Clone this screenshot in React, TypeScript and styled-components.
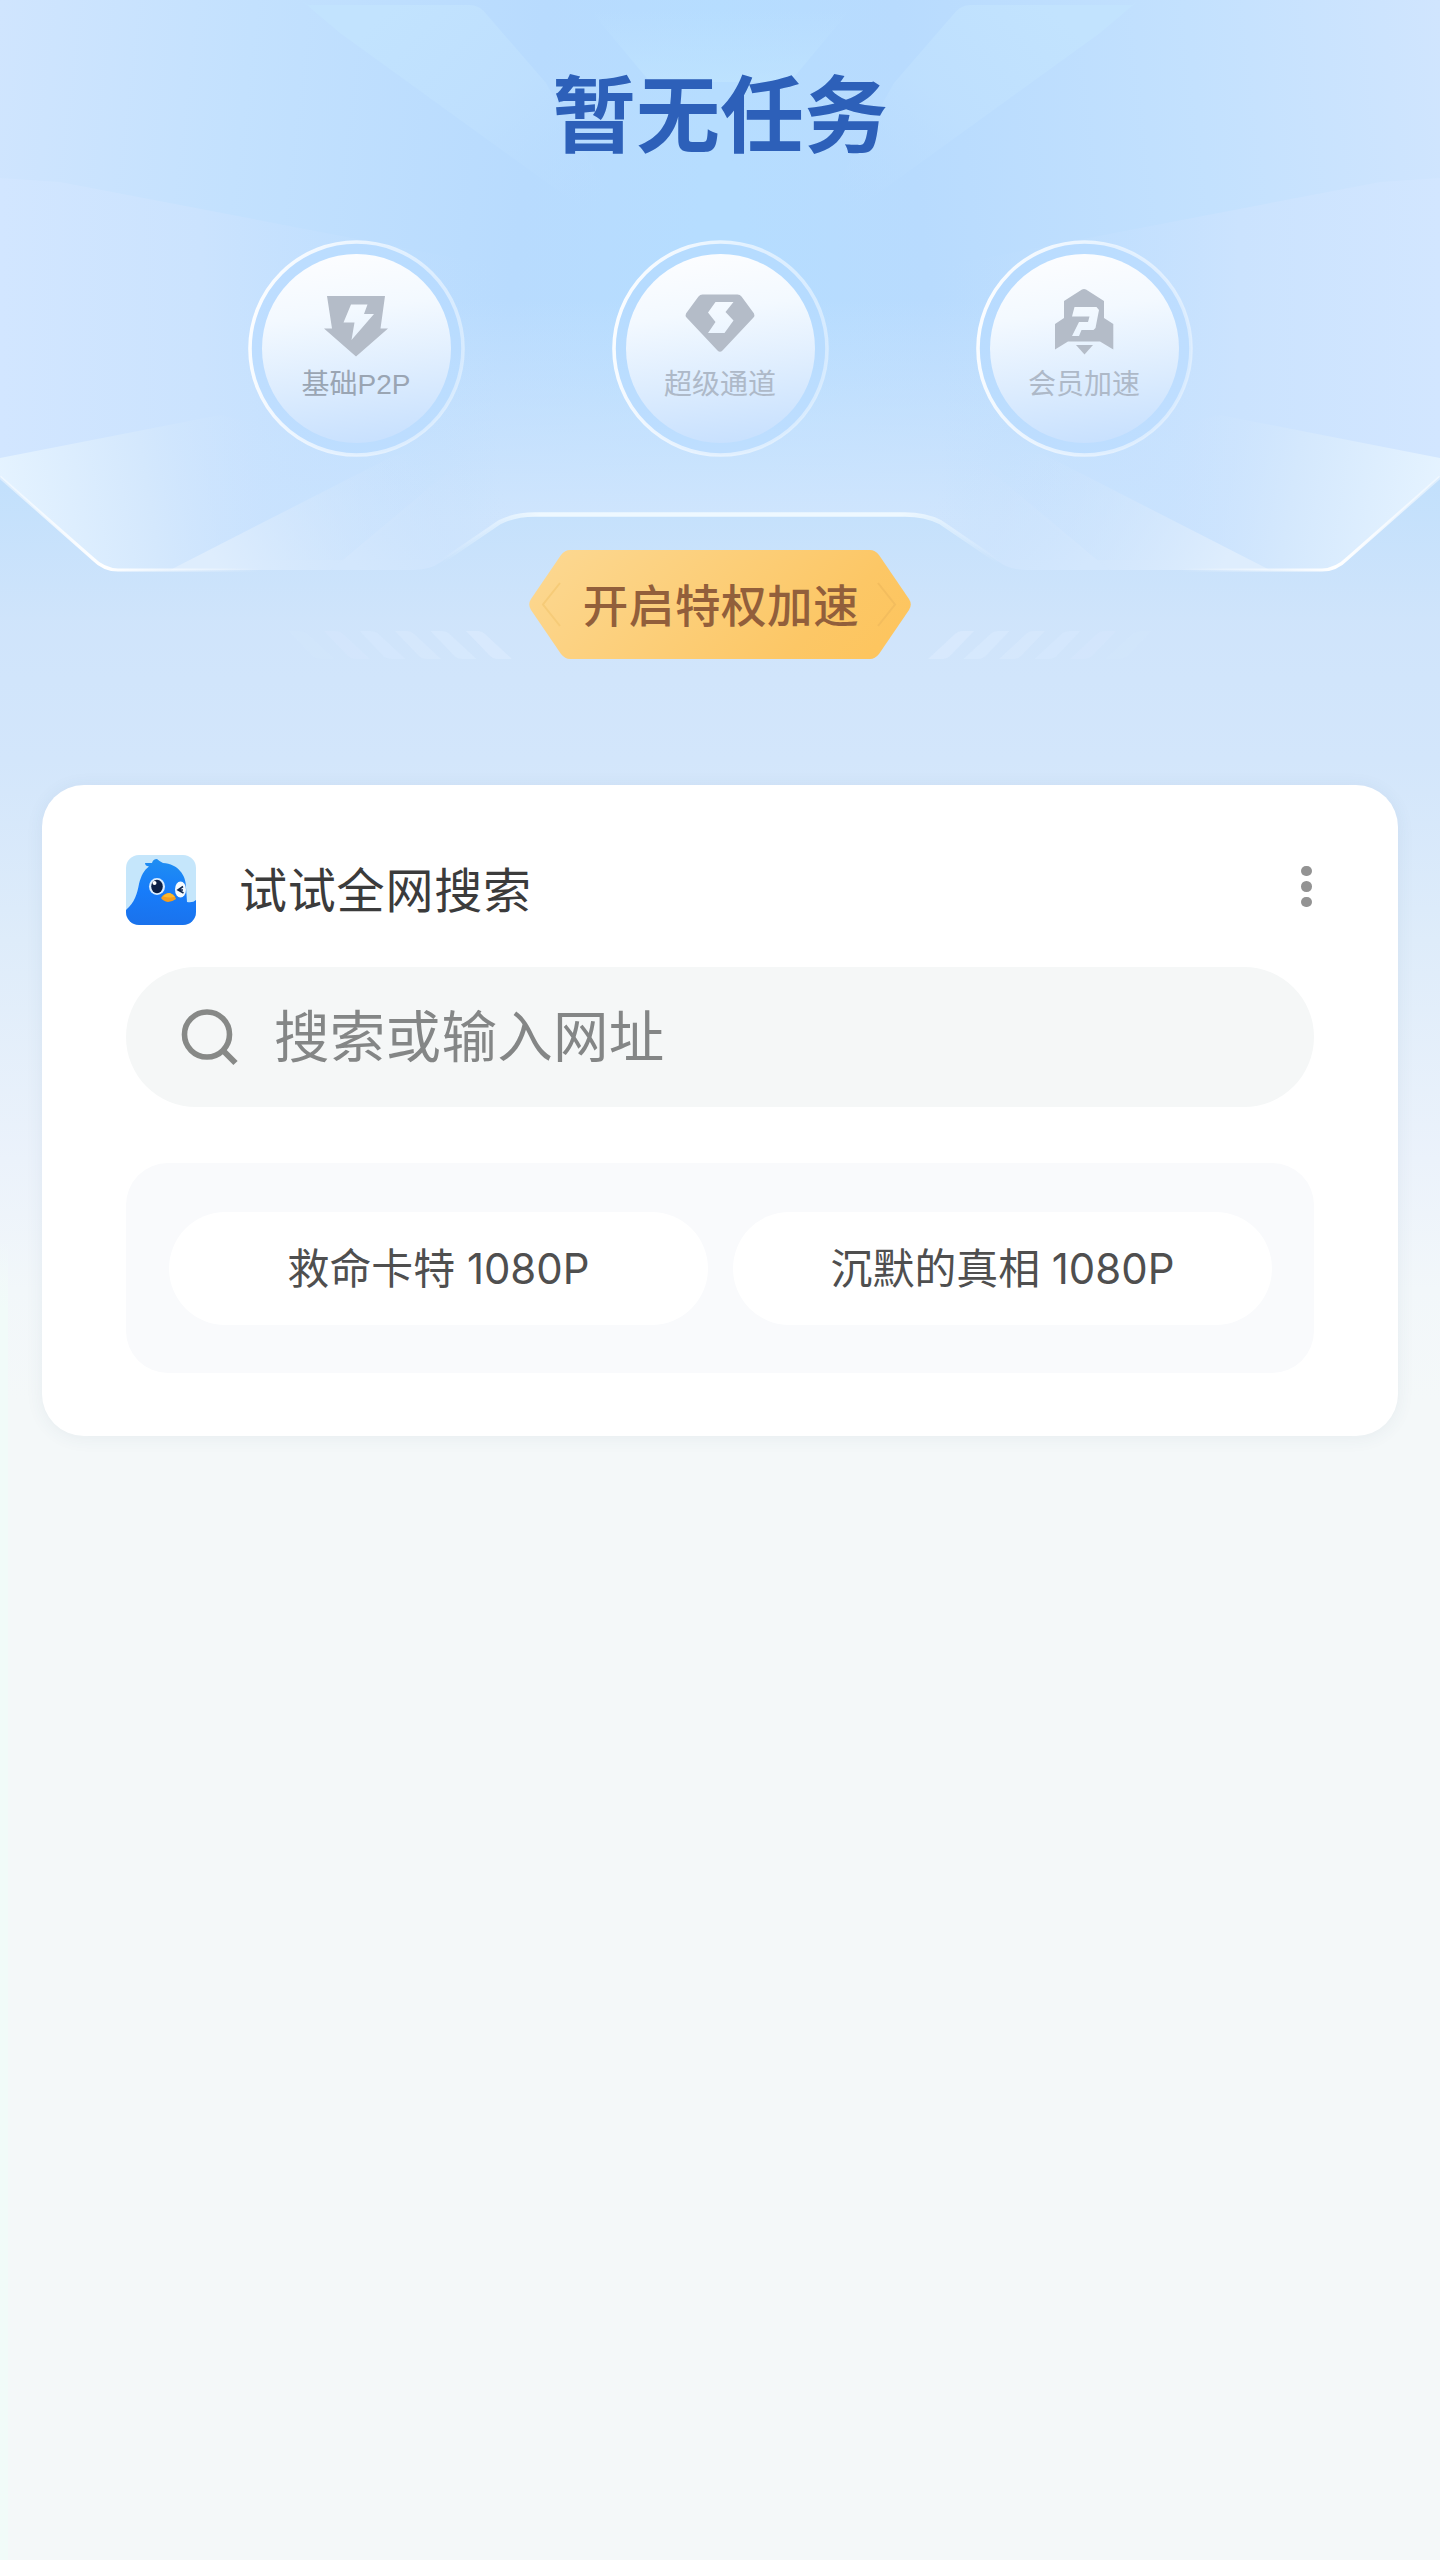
import React from 'react';
import styled, { createGlobalStyle } from 'styled-components';

const Global = createGlobalStyle`
  * { box-sizing: border-box; }
  body { margin: 0; background: #f4f8fa; }
`;

const Page = styled.main`
  position: relative;
  width: 1440px;
  height: 2560px;
  overflow: hidden;
  font-family: 'Noto Sans CJK SC', sans-serif;
  background:
    linear-gradient(180deg, rgba(240, 252, 249, 0) 1240px, #f1fbf9 1310px) 0 0 / 8px 100% no-repeat,
    linear-gradient(180deg, #bfdffe 0px, #c4e0fb 480px, #cfe4fb 600px, #d3e6fb 760px, #deecfa 940px, #ebf2fb 1160px, #f2f7fa 1290px, #f4f8f9 1400px);
`;

const Scene = styled.svg`
  position: absolute;
  inset: 0 0 auto 0;
  display: block;
`;

const Hero = styled.header`
  position: relative;
  height: 785px;
  display: flex;
  flex-direction: column;
  align-items: center;
`;

const Title = styled.h1`
  margin: 60px 0 0;
  height: 100px;
  line-height: 100px;
  font-size: 84px;
  font-weight: 700;
  color: #2d60b9;
`;

const Channels = styled.ul`
  list-style: none;
  display: flex;
  gap: 147px;
  margin: 80px 0 0;
  padding: 0;
`;

const Channel = styled.li`
  position: relative;
  width: 217px;
  height: 217px;
  padding: 14px;
`;

const Ring = styled.svg`
  position: absolute;
  inset: 0;
`;

const Disc = styled.div`
  position: relative;
  width: 189px;
  height: 189px;
  border-radius: 50%;
  display: flex;
  flex-direction: column;
  align-items: center;
  background: linear-gradient(172deg, #fcfdff 5%, #f3f9ff 32%, #dcecfe 66%, #c7e0fe 96%);
`;

const Glyph = styled.svg`
  margin-top: 30px;
  flex: none;
`;

const Label = styled.span<{ $color: string }>`
  margin-top: 3px;
  line-height: 36px;
  font-family: 'Liberation Sans', 'Noto Sans CJK SC', sans-serif;
  font-size: 28px;
  font-weight: 400;
  white-space: nowrap;
  color: ${(p) => p.$color};
`;

const Boost = styled.button`
  position: relative;
  width: 382px;
  height: 109px;
  margin: 93px 0 0;
  padding: 0;
  border: 0;
  background: none;
  font: 500 45.5px/106px 'Noto Sans CJK SC', sans-serif;
  letter-spacing: 0.6px;
  color: #925f3b;
`;

const BoostShape = styled.svg`
  position: absolute;
  inset: 0;
`;

const BoostText = styled.span`
  position: relative;
  display: block;
  height: 109px;
  padding-left: 2px;
`;

const Card = styled.section`
  position: relative;
  width: 1356px;
  height: 651px;
  margin-left: 42px;
  padding: 70px 84px 0;
  border-radius: 42px;
  background: #fff;
  box-shadow: 0 2px 18px rgba(60, 90, 120, 0.07);
`;

const CardHead = styled.div`
  display: flex;
  align-items: center;
  height: 70px;
`;

const CardTitle = styled.h2`
  flex: 1;
  height: 70px;
  margin: 0 0 0 43px;
  font-size: 48px;
  line-height: 65px;
  font-weight: 400;
  letter-spacing: 0.8px;
  color: #3b3b3b;
`;

const More = styled.div`
  display: flex;
  flex-direction: column;
  gap: 5px;
  margin: -7px 2px 0 0;
`;

const Dot = styled.i`
  width: 10.6px;
  height: 10.6px;
  border-radius: 50%;
  background: #939393;
`;

const Search = styled.div`
  display: flex;
  align-items: center;
  height: 140px;
  margin-top: 42px;
  padding-left: 54px;
  border-radius: 70px;
  background: #f5f7f7;
  color: #848686;
  font-size: 55.5px;
  line-height: 133px;
`;

const SearchText = styled.span`
  height: 140px;
  margin-left: 34px;
  letter-spacing: 0.3px;
`;

const Suggestions = styled.div`
  display: flex;
  justify-content: space-between;
  align-items: center;
  height: 210px;
  margin-top: 56px;
  padding: 0 42px 0 43px;
  border-radius: 42px;
  background: #f9fafc;
`;

const Pill = styled.div`
  display: flex;
  justify-content: center;
  width: 539px;
  height: 113px;
  border-radius: 57px;
  background: #fff;
  font-family: Inter, 'Noto Sans CJK SC', sans-serif;
  font-size: 41.9px;
  line-height: 113px;
  color: #4f4f4f;
  white-space: pre;
`;

const HalfScene = () => (
  <g>
    <rect width="721" height="600" fill="url(#side)" />
    <rect y="300" width="721" height="300" fill="url(#fade)" />
    <path d="M0 178 L60 182 L519 270 L519 560 L0 560Z" fill="url(#ray)" />
    <path d="M301 0 L308 5 H470 Q480 5 488 16 L546 83 L640 250 L340 33Z" fill="url(#beam)" />
    <path d="M0 458 L220 415 L395 455 L170 570 H113 Q101 569 92 559 L0 477Z" fill="url(#corner)" />
    <path d="M170 570 L395 455 L500 440 L331 570Z" fill="url(#floor)" />
    <path d="M331 570 L480 445 L560 514 H533 Q515 514 500 522 L441 562 Q430 570 413 570Z" fill="url(#floor2)" />
    <path d="M0 477 L92 559 Q103 570 115 570 H413 Q430 570 441 562 L500 522 Q515 514 533 514 H721 V620 H0Z" fill="url(#under)" />
    <path d="M0 477 L92 558 Q104 570 118 570 H260" fill="none" stroke="url(#edge)" strokeWidth="3.2" />
    <path d="M441 562 L500 522 Q515 514.500 535 514.500 H721" fill="none" stroke="url(#ridge)" strokeWidth="4.500" />
    {[0, 1, 2, 3, 4, 5].map((i) => (
      <path
        key={i}
        d="M0 0 H11 Q16 0 19 3 L46 28 H32 Q27 28 24 25Z"
        transform={`translate(${466 - i * 35.5} 631)`}
        fill="#d9eafe"
        opacity={0.8 - i * 0.12}
      />
    ))}
  </g>
);

const Backdrop = () => (
  <Scene width="1440" height="785" viewBox="0 0 1440 785">
    <defs>
      <linearGradient id="side" x1="0" y1="0" x2="1" y2="0.1">
        <stop offset="0" stopColor="#d0e5fe" />
        <stop offset="0.35" stopColor="#c3e1fe" />
        <stop offset="0.75" stopColor="#b8dbfe" />
        <stop offset="1" stopColor="#b6ddff" />
      </linearGradient>
      <linearGradient id="ray" gradientUnits="userSpaceOnUse" x1="0" y1="300" x2="500" y2="300">
        <stop offset="0" stopColor="#d2e6ff" />
        <stop offset="0.4" stopColor="#cbe3fe" />
        <stop offset="1" stopColor="#bbddff" stopOpacity="0" />
      </linearGradient>
      <linearGradient id="beam" gradientUnits="userSpaceOnUse" x1="400" y1="0" x2="590" y2="215">
        <stop offset="0" stopColor="#c2e3fe" />
        <stop offset="0.5" stopColor="#bfe0fe" stopOpacity="0.8" />
        <stop offset="1" stopColor="#b9dcff" stopOpacity="0" />
      </linearGradient>
      <linearGradient id="corner" gradientUnits="userSpaceOnUse" x1="0" y1="500" x2="290" y2="450">
        <stop offset="0" stopColor="#e5f3ff" />
        <stop offset="0.5" stopColor="#d4e8fd" />
        <stop offset="1" stopColor="#c7e1fe" stopOpacity="0" />
      </linearGradient>
      <linearGradient id="floor" gradientUnits="userSpaceOnUse" x1="220" y1="570" x2="430" y2="450">
        <stop offset="0" stopColor="#deedfd" />
        <stop offset="1" stopColor="#cbe2fc" stopOpacity="0" />
      </linearGradient>
      <linearGradient id="floor2" gradientUnits="userSpaceOnUse" x1="360" y1="570" x2="470" y2="460">
        <stop offset="0" stopColor="#d3e7fd" />
        <stop offset="1" stopColor="#cbe2fc" stopOpacity="0" />
      </linearGradient>
      <linearGradient id="under" gradientUnits="userSpaceOnUse" x1="0" y1="480" x2="0" y2="620">
        <stop offset="0" stopColor="#c2e0fc" />
        <stop offset="1" stopColor="#cfe4fb" />
      </linearGradient>
      <linearGradient id="edge" gradientUnits="userSpaceOnUse" x1="0" y1="0" x2="260" y2="0">
        <stop offset="0" stopColor="#fff" stopOpacity="0.4" />
        <stop offset="0.4" stopColor="#fff" />
        <stop offset="1" stopColor="#fff" stopOpacity="0" />
      </linearGradient>
      <linearGradient id="ridge" gradientUnits="userSpaceOnUse" x1="441" y1="0" x2="540" y2="0">
        <stop offset="0" stopColor="#eef8ff" stopOpacity="0" />
        <stop offset="1" stopColor="#eef8ff" />
      </linearGradient>
      <linearGradient id="fade" gradientUnits="userSpaceOnUse" x1="0" y1="300" x2="0" y2="520">
        <stop offset="0" stopColor="#cfe5fd" stopOpacity="0" />
        <stop offset="1" stopColor="#cfe5fd" />
      </linearGradient>
      <linearGradient id="crown" x1="0" y1="0" x2="0" y2="1">
        <stop offset="0" stopColor="#c1e5fe" stopOpacity="0" />
        <stop offset="1" stopColor="#c1e5fe" stopOpacity="0.6" />
      </linearGradient>
    </defs>
    <HalfScene />
    <g transform="translate(1440 0) scale(-1 1)">
      <HalfScene />
    </g>
    <path d="M590 10 H850 L790 82 H650Z" fill="url(#crown)" />
  </Scene>
);

const RingArt = () => (
  <Ring width="217" height="217" viewBox="0 0 217 217">
    <defs>
      <linearGradient id="ringStroke" x1="0" y1="0.3" x2="1" y2="0.6">
        <stop offset="0" stopColor="#fff" stopOpacity="0.95" />
        <stop offset="0.5" stopColor="#fff" stopOpacity="0.6" />
        <stop offset="1" stopColor="#fff" stopOpacity="0.4" />
      </linearGradient>
    </defs>
    <circle cx="108.500" cy="108.500" r="106.500" fill="#b7daff" fillOpacity="0.55" stroke="url(#ringStroke)" strokeWidth="3.600" />
  </Ring>
);

const GREY = '#b4bcc8';

const ArrowBolt = () => (
  <Glyph width="80" height="80" viewBox="0 0 80 80">
    <path
      fill={GREY}
      fillRule="evenodd"
      d="M11 12 H69 L64.500 44.500 H72 L40 72.500 L8 44.500 H16Z M35 20.500 H51.500 L48 30 H58 L35.500 56 L38.500 38.500 H27.500Z"
    />
  </Glyph>
);

const Diamond = () => (
  <Glyph width="80" height="80" viewBox="0 0 80 80">
    <path
      fill={GREY}
      fillRule="evenodd"
      d="M22.500 10.500 H57.500 Q60 10.500 61.500 12.500 L74 29.500 Q75 31.500 73.500 33.500 L42.500 66.500 Q40 69 37.500 66.500 L6.500 33.500 Q5 31.500 6 29.500 L18.500 12.500 Q20 10.500 22.500 10.500Z M35.500 18 H53.500 L45.500 28 L53.500 36.500 L44.500 49 H28 L35.500 38 L28 28.500Z"
    />
  </Glyph>
);

const Rocket = () => (
  <Glyph width="80" height="80" viewBox="0 0 80 80">
    <path
      fill={GREY}
      fillRule="evenodd"
      d="M38 5.500 Q40 4.500 42 5.500 L60 17 V34 L69.300 40 V65.500 L56 57.500 H24 L11 65.500 V40 L20 34 V17Z M30.500 23 H52.500 L55 26 L51.500 44 L49.500 46 H37.500 L35 52 H28 L35 38 H44 L45.500 32.500 H28Z"
    />
    <path fill={GREY} d="M32 61 H49 L40.500 70.500Z" />
  </Glyph>
);

const Bird = () => (
  <svg width="70" height="70" viewBox="0 0 70 70">
    <defs>
      <clipPath id="birdClip">
        <rect width="70" height="70" rx="13" />
      </clipPath>
      <linearGradient id="birdBlue" x1="0.5" y1="0" x2="0.4" y2="1">
        <stop offset="0" stopColor="#1f8ef2" />
        <stop offset="0.5" stopColor="#177cfa" />
        <stop offset="1" stopColor="#1a72ec" />
      </linearGradient>
    </defs>
    <g clipPath="url(#birdClip)">
      <rect width="70" height="70" fill="#c5e6fb" />
      <path
        d="M0 55 C9 47 11 39 13 29 C15 21 18 15 23 11.500 Q19 11 19 8 Q23 8 26 8 Q27 4 31 4 Q33 6 37 8 C52 9 60 20 60 32 L61 47 Q67 48 70 45 V70 H0Z"
        fill="url(#birdBlue)"
      />
      <ellipse cx="31" cy="31.500" rx="8" ry="8.500" fill="#d9ecff" />
      <ellipse cx="31" cy="31.500" rx="5.800" ry="6.700" fill="#0b1f45" />
      <circle cx="28.500" cy="28" r="2" fill="#fff" />
      <ellipse cx="54.500" cy="34.500" rx="5.500" ry="8" fill="#f4faff" />
      <path d="M57 31.500 L52 35 L57.500 38 M52 35 H57" fill="none" stroke="#12284f" strokeWidth="1.600" />
      <path d="M35 43 Q38 38 43.500 38 Q49 40 50 44 Q46 47 42 47 Q37 46 35 43Z" fill="#f59d1f" />
      <path d="M37 41.500 Q40 38 44 38 Q47 39 49 42 Q43 43 37 41.500Z" fill="#fcb930" />
    </g>
  </svg>
);

const Magnifier = () => (
  <svg width="60" height="60" viewBox="0 0 60 60" fill="none" stroke="#878987" strokeWidth="5.600">
    <circle cx="27" cy="27.500" r="22.500" />
    <path d="M42.500 43 L55.500 56" strokeWidth="6" />
  </svg>
);

const channels = [
  { label: '基础P2P', color: '#9aa5b3', Icon: ArrowBolt },
  { label: '超级通道', color: '#aeb9c8', Icon: Diamond },
  { label: '会员加速', color: '#aeb9c8', Icon: Rocket },
];

const suggestions = ['救命卡特 1080P', '沉默的真相 1080P'];

export default function App() {
  return (
    <Page>
      <Global />
      <Backdrop />
      <Hero>
        <Title>暂无任务</Title>
        <Channels>
          {channels.map(({ label, color, Icon }) => (
            <Channel key={label}>
              <RingArt />
              <Disc>
                <Icon />
                <Label $color={color}>{label}</Label>
              </Disc>
            </Channel>
          ))}
        </Channels>
        <Boost>
          <BoostShape width="382" height="109" viewBox="0 0 382 109">
            <defs>
              <linearGradient id="gold" x1="0" y1="0.3" x2="1" y2="0.6">
                <stop offset="0" stopColor="#fcd78f" />
                <stop offset="0.8" stopColor="#fcc766" />
                <stop offset="1" stopColor="#fdc55f" />
              </linearGradient>
            </defs>
            <path
              d="M41 0 H341 Q346 0 350 5 L380 49 Q383.500 54.500 380 60 L350 104 Q346 109 341 109 H41 Q36 109 32 104 L2 60 Q-1.500 54.500 2 49 L32 5 Q36 0 41 0Z"
              fill="url(#gold)"
            />
            <path d="M31 33 L14 54.500 L31 76" fill="none" stroke="#f6cb78" strokeWidth="2" />
            <path d="M349 33 L366 54.500 L349 76" fill="none" stroke="#f3bd5e" strokeWidth="2" />
          </BoostShape>
          <BoostText>开启特权加速</BoostText>
        </Boost>
      </Hero>
      <Card>
        <CardHead>
          <Bird />
          <CardTitle>试试全网搜索</CardTitle>
          <More>
            <Dot />
            <Dot />
            <Dot />
          </More>
        </CardHead>
        <Search>
          <Magnifier />
          <SearchText>搜索或输入网址</SearchText>
        </Search>
        <Suggestions>
          {suggestions.map((s) => (
            <Pill key={s}>{s}</Pill>
          ))}
        </Suggestions>
      </Card>
    </Page>
  );
}
